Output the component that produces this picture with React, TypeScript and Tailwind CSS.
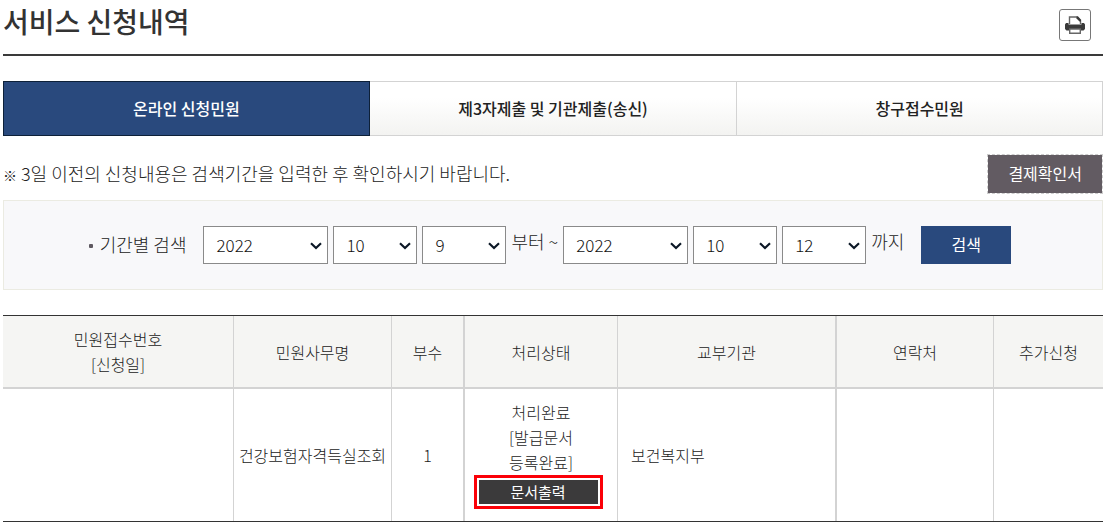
import { useState } from 'react';

const TABS = ['온라인 신청민원', '제3자제출 및 기관제출(송신)', '창구접수민원'];

const YEARS = ['2020', '2021', '2022'];
const MONTHS = Array.from({ length: 12 }, (_, i) => String(i + 1));
const DAYS = Array.from({ length: 31 }, (_, i) => String(i + 1));

type Row = {
  receipt: string;
  name: string;
  copies: number;
  agency: string;
  contact: string;
  extra: string;
};

const ROWS: Row[] = [
  { receipt: '', name: '건강보험자격득실조회', copies: 1, agency: '보건복지부', contact: '', extra: '' },
];

function DateSelect({ label, options, initial, wide }: {
  label: string;
  options: string[];
  initial: string;
  wide?: boolean;
}) {
  return (
    <span className={`relative ${wide ? 'w-[125px]' : 'w-[84px]'}`}>
      <select
        aria-label={label}
        defaultValue={initial}
        className="block h-[38px] w-full appearance-none border border-[#8a8a8a] bg-white px-3 text-[17px] font-light text-[#111]">
        {options.map(o => <option key={o}>{o}</option>)}
      </select>
      <svg width="12" height="8" viewBox="0 0 12 8" aria-hidden="true"
        className="pointer-events-none absolute top-4 right-1.5">
        <path d="M1 1.300l5 4.700 5-4.700" fill="none" stroke="#0b1726" strokeWidth="2.200" />
      </svg>
    </span>
  );
}

function PrinterIcon() {
  return (
    <svg width="20" height="18" viewBox="0 0 20 18" aria-hidden="true">
      <path d="M4.500 8V1h8l3 3v4" fill="#fff" stroke="#666" strokeWidth="1.400" />
      <path d="M11.500.500h1.500l3 3.500v1.500h-1.500l-3-3z" fill="#3a3a3a" />
      <path d="M1 7h2.500v1.500h13V7H19l1 1.500V13l-1.500 1.500h-17L0 13V8.500z" fill="#3a3a3a" />
      <path d="M4.700 13h10.600v4.200H4.700z" fill="#fff" stroke="#666" strokeWidth="1.400" />
    </svg>
  );
}

export default function App() {
  const [tab, setTab] = useState(0);

  return (
    <main className="bg-white pl-[3px] pr-1 font-['Noto_Sans_CJK_KR',sans-serif] text-base font-light text-[#222]">

      {/* Title */}
      <header className="flex h-14 items-start justify-between border-b-2 border-[#3a3a3a] pr-3">
        <h1 className="text-[28px] leading-[42px] font-medium text-[#333]">서비스 신청내역</h1>
        <button type="button" aria-label="인쇄" className="mt-[9px] flex size-8 items-center justify-center rounded-[3px] border border-[#777] bg-white">
          <PrinterIcon />
        </button>
      </header>

      {/* Tabs */}
      <div role="tablist" className="mt-[25px] grid grid-cols-3">
        {TABS.map((t, i) => (
          <button
            key={t}
            type="button"
            role="tab"
            aria-selected={tab === i}
            onClick={() => setTab(i)}
            className={`h-[55px] border pb-0.5 font-medium ${tab === i
              ? 'border-[#0d2038] bg-[#29497d] text-white'
              : 'border-[#d3d3d3] bg-linear-to-b from-white from-30% to-[#f3f3f1] not-last:border-r-0 nth-2:border-l-0'}`}>
            {t}
          </button>
        ))}
      </div>

      {/* Notice */}
      <div className="mt-[18px] flex items-center justify-between">
        <p className="pb-0.5 text-lg"><span className="text-sm">※</span> 3일 이전의 신청내용은 검색기간을 입력한 후 확인하시기 바랍니다.</p>
        <button type="button" className="h-10 border border-dashed border-[#ccc] bg-[#625b62] bg-clip-padding px-5 pb-0.5 font-normal text-white">
          결제확인서
        </button>
      </div>

      {/* Period search */}
      <form
        onSubmit={e => e.preventDefault()}
        className="mt-1.5 flex items-center justify-center gap-[5px] border border-[#ebebe2] bg-[#f8f8fa] py-[25px] pr-1.5 text-lg">
        <span className="mr-3 flex items-center gap-[7px] pb-0.5">
          <span className="mt-1 size-1 rounded-[1px] bg-[#5e5960]" />
          기간별 검색
        </span>
        <DateSelect label="시작 연도" options={YEARS} initial="2022" wide />
        <DateSelect label="시작 월" options={MONTHS} initial="10" />
        <DateSelect label="시작 일" options={DAYS} initial="9" />
        <span className="pb-2">부터 ~</span>
        <DateSelect label="종료 연도" options={YEARS} initial="2022" wide />
        <DateSelect label="종료 월" options={MONTHS} initial="10" />
        <DateSelect label="종료 일" options={DAYS} initial="12" />
        <span className="pb-2">까지</span>
        <button type="submit" className="ml-3 h-[38px] w-[90px] bg-[#29497d] pb-0.5 text-base font-normal text-white">검색</button>
      </form>

      {/* Applications */}
      <table className="mt-[25px] w-full table-fixed border-separate border-spacing-0 border-y border-[#333] text-center leading-[25px]">
        <colgroup>
          <col className="w-[231px]" />
          <col className="w-[158px]" />
          <col className="w-[73px]" />
          <col className="w-[153px]" />
          <col className="w-[219px]" />
          <col className="w-[157px]" />
          <col className="w-[109px]" />
        </colgroup>
        <thead className="bg-[#f5f5f3] [&_th]:border-b-2 [&_th]:border-[#d3d3d3] [&_th]:pt-[11px] [&_th]:pb-2.5 [&_th]:font-light">
          <tr>
            <th scope="col" className="border-r">민원접수번호<br />[신청일]</th>
            <th scope="col" className="border-r">민원사무명</th>
            <th scope="col" className="border-r-2">부수</th>
            <th scope="col" className="border-r">처리상태</th>
            <th scope="col" className="border-r-2">교부기관</th>
            <th scope="col" className="border-r">연락처</th>
            <th scope="col">추가신청</th>
          </tr>
        </thead>
        <tbody className="[&_td]:border-[#d3d3d3]">
          {ROWS.map(r => (
            <tr key={r.name}>
              <td className="border-r">{r.receipt}</td>
              <td className="border-r whitespace-nowrap">{r.name}</td>
              <td className="border-r-2">{r.copies}</td>
              <td className="border-r pt-[11px] pb-3">
                처리완료<br />[발급문서<br />등록완료]
                <div className="flex justify-center pr-1.5">
                  <div className="w-[129px] border-3 border-[#fb0007] p-0.5">
                    <button type="button" className="block h-6 w-full bg-[#3b3a3b] text-[15px] leading-6 font-normal text-white">
                      문서출력
                    </button>
                  </div>
                </div>
              </td>
              <td className="border-r-2 pl-[13px] text-left">{r.agency}</td>
              <td className="border-r">{r.contact}</td>
              <td>{r.extra}</td>
            </tr>
          ))}
        </tbody>
      </table>
    </main>
  );
}
